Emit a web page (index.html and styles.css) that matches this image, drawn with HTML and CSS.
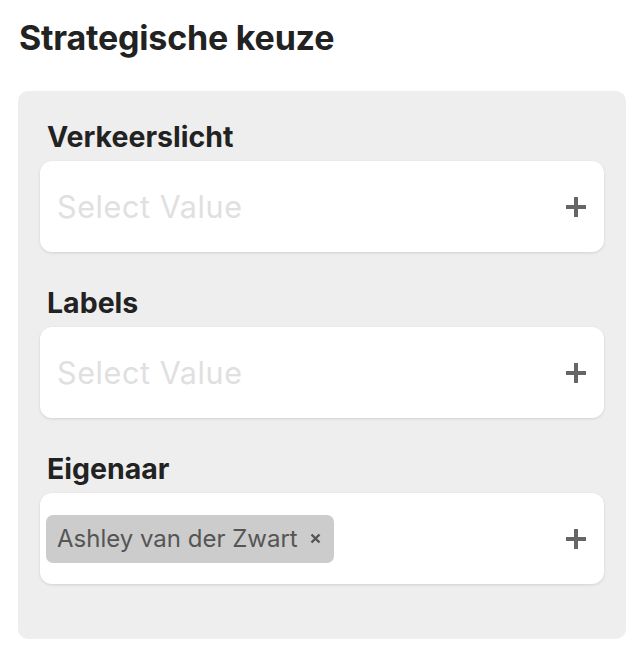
FILE: index.html
```html
<!DOCTYPE html>
<html lang="nl">
<head>
<meta charset="utf-8">
<title>Strategische keuze</title>
<link rel="stylesheet" href="styles.css">
</head>
<body>
<div class="page">
  <h1 class="title">Strategische keuze</h1>
  <div class="panel">
    <div class="field">
      <div class="label">Verkeerslicht</div>
      <div class="box">
        <span class="placeholder">Select Value</span>
        <svg class="plus" width="20" height="20" viewBox="0 0 20 20"><rect x="0" y="8" width="20" height="4"/><rect x="8" y="0" width="4" height="20"/></svg>
      </div>
    </div>
    <div class="field">
      <div class="label">Labels</div>
      <div class="box">
        <span class="placeholder">Select Value</span>
        <svg class="plus" width="20" height="20" viewBox="0 0 20 20"><rect x="0" y="8" width="20" height="4"/><rect x="8" y="0" width="4" height="20"/></svg>
      </div>
    </div>
    <div class="field">
      <div class="label">Eigenaar</div>
      <div class="box box-chips">
        <span class="chip"><span class="chip-text">Ashley van der Zwart</span><svg class="chip-x" width="11" height="11" viewBox="0 0 11 11"><path d="M1.5 1.5 L9.5 9.5 M9.5 1.5 L1.5 9.5"/></svg></span>
        <svg class="plus" width="20" height="20" viewBox="0 0 20 20"><rect x="0" y="8" width="20" height="4"/><rect x="8" y="0" width="4" height="20"/></svg>
      </div>
    </div>
  </div>
</div>
</body>
</html>
```
FILE: styles.css
```css
html, body {
  margin: 0;
  padding: 0;
  background: #ffffff;
}
body {
  font-family: Inter, "Noto Sans", "Liberation Sans", sans-serif;
  color: #222222;
}
.page {
  padding: 14px 16px 0 18px;
}
.title {
  margin: 0 0 0 1px;
  font-size: 34px;
  line-height: 48px;
  font-weight: 700;
  color: #222222;
  letter-spacing: -0.2px;
}
.panel {
  margin-top: 29px;
  width: 608px;
  box-sizing: border-box;
  background: #eeeeee;
  border-radius: 10px;
  padding: 30px 22px 55px 22px;
  display: flex;
  flex-direction: column;
  gap: 35px;
}
.label {
  font-size: 28.5px;
  line-height: 32px;
  font-weight: 700;
  padding-left: 7px;
  margin-bottom: 8px;
  color: #222222;
}
.box {
  height: 91px;
  box-sizing: border-box;
  background: #ffffff;
  border-radius: 12px;
  box-shadow: 0 1px 3px rgba(0, 0, 0, 0.12);
  display: flex;
  align-items: center;
  justify-content: space-between;
  padding: 0 18px 0 17px;
}
.box-chips {
  padding-left: 6px;
}
.placeholder {
  font-size: 30.5px;
  letter-spacing: 0.6px;
  color: #e0e0e0;
}
.plus {
  fill: #666666;
  flex: none;
}
.chip {
  display: flex;
  align-items: center;
  gap: 12px;
  height: 48px;
  box-sizing: border-box;
  background: #cccccc;
  border-radius: 7px;
  padding: 0 13px 0 11px;
}
.chip-text {
  font-size: 24px;
  color: #555555;
}
.chip-x {
  stroke: #555555;
  stroke-width: 2.4;
  fill: none;
}
```
